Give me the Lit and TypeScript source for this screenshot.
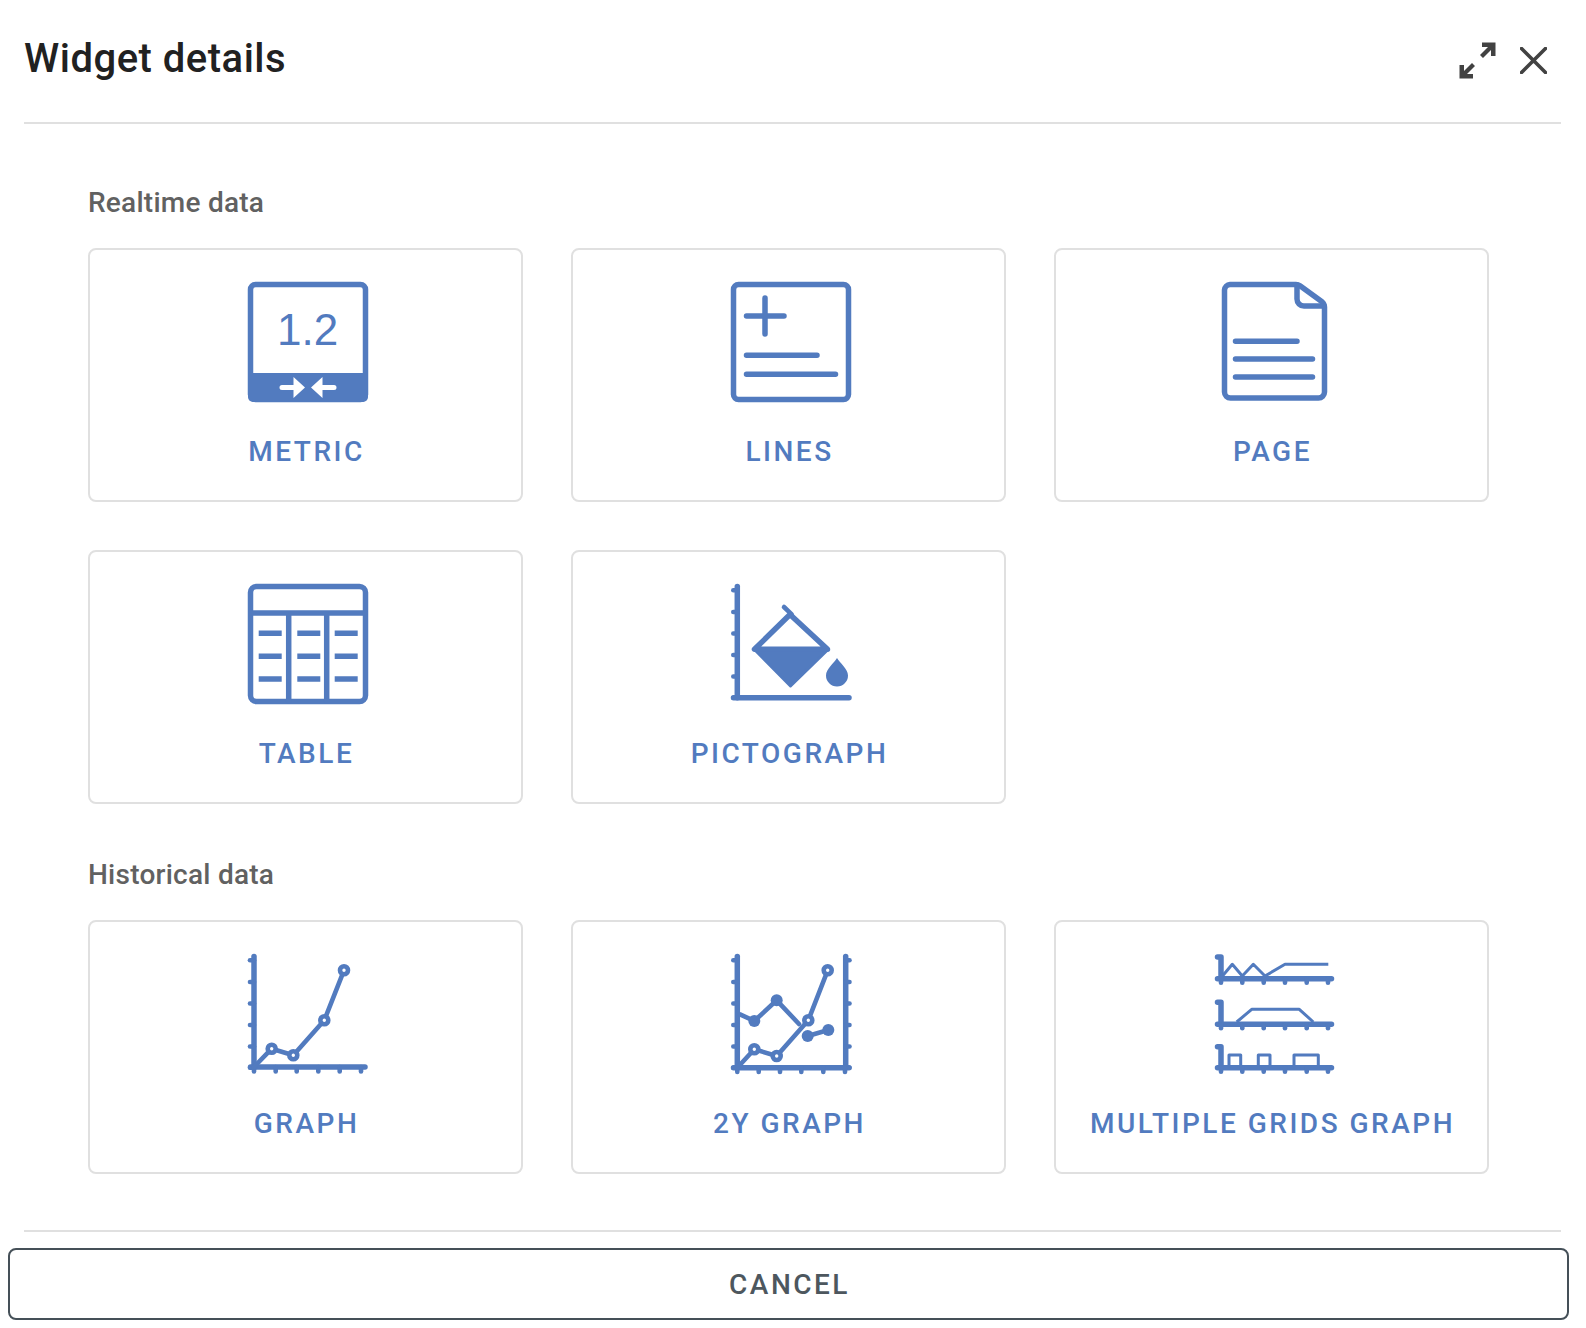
import { LitElement, css, html, svg } from 'lit';
import { customElement } from 'lit/decorators.js';

const tick = (x1: number, y1: number, x2: number, y2: number) =>
  svg`<line class="s4" x1=${x1} y1=${y1} x2=${x2} y2=${y2}></line>`;

const yTicks = [6.3, 28, 49.5, 71, 92.5, 113.7];

const leftAxis = (x: number) => svg`
  <line class="s5" x1=${x} y1="2.5" x2=${x} y2="113.7"></line>
  ${yTicks.map((y) => tick(x - 4, y, x, y))}
`;

const dot = (x: number, y: number) =>
  svg`<circle class="ring" cx=${x} cy=${y} r="4"></circle>`;

const solidDot = (x: number, y: number) =>
  svg`<circle class="solid" cx=${x} cy=${y} r="6"></circle>`;

const icons: Record<string, unknown> = {
  metric: svg`
    <rect class="s5" x="2.5" y="2.5" width="115" height="115" rx="5"></rect>
    <path class="solid" d="M0 91h120v24a5 5 0 0 1-5 5H5a5 5 0 0 1-5-5z"></path>
    <text class="num" x="29" y="63">1.2</text>
    <path class="arrow" d="M34 105.500h13M86 105.500H73"></path>
    <path class="arrow-head" d="M45.500 95v21L57 105.500zM74.500 95v21L63 105.500z"></path>
  `,
  lines: svg`
    <rect class="s5" x="2.5" y="2.5" width="115" height="115" rx="5"></rect>
    <path class="s5" d="M15.500 34H53M34 16v36M15.500 73.300H86M15.500 92.300h89"></path>
  `,
  page: svg`
    <path class="s5" d="M16 2.500h66a7 7 0 0 1 4 1.300l22 16a7 7 0 0 1 2.500 5.200V110a6 6 0 0 1-6 6H16.500a6 6 0 0 1-6-6V8a6 6 0 0 1 5.500-5.500z"></path>
    <path class="s5" d="M83 3v14a7 7 0 0 0 7 7h20"></path>
    <path class="s5" d="M21.500 59.300H83M21.500 77h77M21.500 95h77"></path>
  `,
  table: svg`
    <rect class="s5" x="2.5" y="2.5" width="115" height="115" rx="6"></rect>
    <path class="s5" d="M3 29h114M40.700 29v88M78.700 29v88"></path>
    <path class="s5 flat" d="M10.700 49.300h23M49.300 49.300h23M86.700 49.300h23M10.700 72.300h23M49.300 72.300h23M86.700 72.300h23M10.700 95h23M49.300 95h23M86.700 95h23"></path>
  `,
  pictograph: svg`
    ${leftAxis(6.3)}
    <line class="s5" x1="2.500" y1="113.700" x2="118" y2="113.700"></line>
    <path class="s4" d="M53 23l7.700 7.300"></path>
    <path class="s5" d="M59 30.500L23.500 65.300H96.500z"></path>
    <path class="solid edge" d="M24 66h72.500L59.500 102z"></path>
    <path class="solid" d="M106 74c3 5 11 11 11 17.500a11 11 0 0 1-22 0C95 85 103 79 106 74z"></path>
  `,
  graph: svg`
    ${leftAxis(6)}
    <line class="s5" x1="2.500" y1="113" x2="117" y2="113"></line>
    ${[6, 27.7, 48.7, 70.3, 91.7, 113].map((x) => tick(x, 113, x, 117.5))}
    <path class="s4" d="M6 113l17.700-18.300 21.600 6.600 31-35L96 16.300"></path>
    ${dot(23.7, 94.7)}${dot(45.3, 101.3)}${dot(76.3, 66.3)}${dot(96, 16.3)}
  `,
  graph2: svg`
    ${leftAxis(6.3)}
    <line class="s5" x1="114.700" y1="2.500" x2="114.700" y2="113.700"></line>
    ${yTicks.map((y) => tick(114.7, y, 118.5, y))}
    <line class="s5" x1="2.500" y1="113.700" x2="118" y2="113.700"></line>
    ${[6.3, 27.7, 49, 70.3, 92.3, 114].map((x) => tick(x, 113.7, x, 118))}
    <path class="s4" d="M9 60.300l14.300 6.700 22.400-20.700L68 70M76.700 82l20.600-6"></path>
    ${solidDot(23.3, 67)}${solidDot(45.7, 46.3)}${solidDot(76.7, 82)}${solidDot(97.3, 76)}
    <path class="s4" d="M6.300 113.700l17-18.400 22.400 6.700 31.600-35.700 19.400-50"></path>
    ${dot(23.3, 95.3)}${dot(45.7, 102)}${dot(77.3, 66.3)}${dot(96.7, 16.3)}
  `,
  multi: svg`
    ${[
      [24.7, 3],
      [70.3, 48.3],
      [113.7, 92.7],
    ].map(
      ([y, top]) => svg`
        <path class="s5" d="M3.500 ${y}H117.500M7 ${y}V${top}H3.500"></path>
        ${[7, 28.3, 49.7, 71, 92.7, 114].map((x) => tick(x, y, x, y + 4))}
      `
    )}
    <path class="thin" d="M7 23.700l11.300-13.400 10 11.700 11-11.700L51 22l20-11.700h43.300"></path>
    <path class="thin" d="M22.700 68l15-12.700h47.600L99.300 68"></path>
    <path class="thin" d="M15 113v-12h11.700v12M44.300 113v-12H56v12M80 113v-12h24.300v12"></path>
  `,
};

@customElement('app-root')
export class AppRoot extends LitElement {
  static styles = css`
    :host {
      display: block;
      padding: 0 17px 3px 8px;
      font-family: Roboto, 'Liberation Sans', sans-serif;
      background: #fff;
    }

    .header {
      display: flex;
      align-items: center;
      justify-content: space-between;
      height: 122px;
      margin: 0 8px 0 16px;
      border-bottom: 2px solid #e0e0e0;
    }

    .title {
      margin: 0 0 4px;
      font-size: 40px;
      line-height: 48px;
      font-weight: 500;
      letter-spacing: 0.5px;
      color: #212121;
    }

    .actions {
      display: flex;
      align-items: center;
      gap: 24px;
      padding: 0 14px 1px 0;
    }

    .actions svg {
      display: block;
    }

    .expand {
      fill: #424242;
    }

    .close {
      fill: none;
      stroke: #424242;
      stroke-width: 3.6;
      stroke-linecap: round;
    }

    .body {
      margin: 0 16px;
      padding: 0 64px;
    }

    .section-title {
      margin: 0;
      font-size: 28px;
      line-height: 32px;
      font-weight: 500;
      letter-spacing: 0.25px;
      color: #616161;
    }

    .realtime {
      padding-top: 63px;
    }

    .historical {
      padding-top: 55px;
    }

    .grid {
      display: grid;
      grid-template-columns: repeat(3, 435px);
      grid-auto-rows: 254px;
      gap: 48px;
      margin-top: 29px;
    }

    .card {
      display: flex;
      flex-direction: column;
      align-items: center;
      box-sizing: border-box;
      padding-top: 31.5px;
      border: 2px solid #e0e0e0;
      border-radius: 8px;
      background: #fff;
    }

    .card svg {
      display: block;
      margin-left: 5px;
      overflow: visible;
      fill: none;
      stroke: #527bbf;
      stroke-linecap: round;
      stroke-linejoin: round;
    }

    .label {
      margin-top: 32px;
      padding-left: 2px;
      font-size: 28px;
      line-height: 36px;
      font-weight: 500;
      letter-spacing: 2.5px;
      color: #527bbf;
    }

    .s5 {
      stroke-width: 5.5;
    }
    .s4 {
      stroke-width: 4.6;
    }
    .thin {
      stroke-width: 3;
      stroke-linecap: butt;
    }
    .flat {
      stroke-linecap: butt;
    }
    .solid {
      fill: #527bbf;
      stroke: none;
    }
    .edge {
      stroke: #527bbf;
      stroke-width: 3;
    }
    .ring {
      fill: #fff;
      stroke-width: 4.6;
    }
    .num {
      fill: #527bbf;
      stroke: none;
      font-family: 'Liberation Sans', sans-serif;
      font-size: 44px;
    }
    .arrow {
      stroke: #fff;
      stroke-width: 5;
    }
    .arrow-head {
      fill: #fff;
      stroke: none;
    }

    .footer {
      margin: 56px 8px 0 16px;
      border-top: 2px solid #e0e0e0;
    }

    .cancel {
      display: block;
      box-sizing: border-box;
      width: calc(100% + 24px);
      height: 72px;
      margin: 16px 0 0 -16px;
      padding: 0 0 0 2px;
      border: 2px solid #455058;
      border-radius: 8px;
      background: #fff;
      font-family: inherit;
      font-size: 28px;
      font-weight: 500;
      letter-spacing: 2.5px;
      color: #4d575e;
    }
  `;

  private card(label: string, icon: string) {
    return html`
      <div class="card">
        <svg width="120" height="120" viewBox="0 0 120 120">${icons[icon]}</svg>
        <span class="label">${label}</span>
      </div>
    `;
  }

  render() {
    return html`
      <div class="header">
        <h1 class="title">Widget details</h1>
        <div class="actions">
          <svg class="expand" width="37" height="37" viewBox="0 0 37 37">
            <path d="M0.500 23V36.500H14V32H8L16 24L13 21L5 29V23z"></path>
            <path d="M36.500 14V0.500H23V5H29L21 13L24 16L32 8V14z"></path>
          </svg>
          <svg class="close" width="27" height="27" viewBox="0 0 27 27">
            <path d="M1.500 1.500L25.500 25.500M25.500 1.500L1.500 25.500"></path>
          </svg>
        </div>
      </div>
      <div class="body">
        <section class="realtime">
          <h2 class="section-title">Realtime data</h2>
          <div class="grid">
            ${this.card('METRIC', 'metric')} ${this.card('LINES', 'lines')}
            ${this.card('PAGE', 'page')} ${this.card('TABLE', 'table')}
            ${this.card('PICTOGRAPH', 'pictograph')}
          </div>
        </section>
        <section class="historical">
          <h2 class="section-title">Historical data</h2>
          <div class="grid">
            ${this.card('GRAPH', 'graph')} ${this.card('2Y GRAPH', 'graph2')}
            ${this.card('MULTIPLE GRIDS GRAPH', 'multi')}
          </div>
        </section>
      </div>
      <div class="footer">
        <button class="cancel">CANCEL</button>
      </div>
    `;
  }
}
